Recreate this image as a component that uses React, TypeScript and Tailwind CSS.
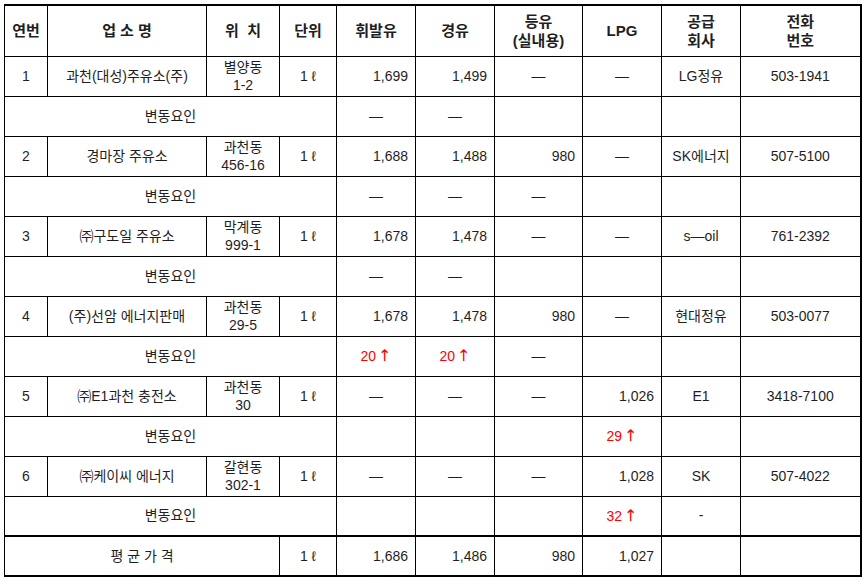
import React from 'react';

const stations = [
  {
    no: '1', name: '과천(대성)주유소(주)', loc: ['별양동', '1-2'],
    price: ['1,699', '1,499', '—', '—'], co: 'LG정유', tel: '503-1941',
    diff: ['—', '—', '', '', ''],
  },
  {
    no: '2', name: '경마장 주유소', loc: ['과천동', '456-16'],
    price: ['1,688', '1,488', '980', '—'], co: 'SK에너지', tel: '507-5100',
    diff: ['—', '—', '—', '', ''],
  },
  {
    no: '3', name: '㈜구도일 주유소', loc: ['막계동', '999-1'],
    price: ['1,678', '1,478', '—', '—'], co: 's—oil', tel: '761-2392',
    diff: ['—', '—', '', '', ''],
  },
  {
    no: '4', name: '(주)선암 에너지판매', loc: ['과천동', '29-5'],
    price: ['1,678', '1,478', '980', '—'], co: '현대정유', tel: '503-0077',
    diff: ['20↑', '20↑', '—', '', ''],
  },
  {
    no: '5', name: '㈜E1과천 충전소', loc: ['과천동', '30'],
    price: ['—', '—', '—', '1,026'], co: 'E1', tel: '3418-7100',
    diff: ['', '', '', '29↑', ''],
  },
  {
    no: '6', name: '㈜케이씨 에너지', loc: ['갈현동', '302-1'],
    price: ['—', '—', '—', '1,028'], co: 'SK', tel: '507-4022',
    diff: ['', '', '', '32↑', '-'],
  },
];

const td = 'border border-black p-0 align-middle';

function Price({ v }: { v: string }) {
  const isNum = /\d/.test(v);
  return (
    <td className={`${td} ${isNum ? 'text-right pr-[7px]' : 'text-center'}`}>{v}</td>
  );
}

function Diff({ v }: { v: string }) {
  if (v.includes('↑')) {
    return (
      <td className={`${td} text-center text-[#ff0000]`}>
        {v.replace('↑', '')}
        <span className="ml-[2px] text-[16px] font-['DejaVu_Sans',sans-serif]">↑</span>
      </td>
    );
  }
  return <td className={`${td} text-center`}>{v}</td>;
}

export default function App() {
  return (
    <div className="w-[868px] h-[581px] bg-white pl-[4px] pt-[4px] text-[14px] text-[#1f1f1f] font-['Liberation_Sans','Noto_Sans_CJK_KR',sans-serif]">
      <table className="border-collapse table-fixed w-[856px] border-t-2 border-r-2 border-black">
        <colgroup>
          <col className="w-[43px]" />
          <col className="w-[159px]" />
          <col className="w-[73px]" />
          <col className="w-[57px]" />
          <col className="w-[79px]" />
          <col className="w-[79px]" />
          <col className="w-[88px]" />
          <col className="w-[79px]" />
          <col className="w-[79px]" />
          <col className="w-[120px]" />
        </colgroup>
        <thead>
          <tr className="h-[51px] font-bold text-[15px] text-center leading-[19px]">
            <th className={td}>연번</th>
            <th className={td}>업 소 명</th>
            <th className={`${td} whitespace-pre`}>위  치</th>
            <th className={td}>단위</th>
            <th className={td}>휘발유</th>
            <th className={td}>경유</th>
            <th className={td}>등유<br />(실내용)</th>
            <th className={td}>LPG</th>
            <th className={td}>공급<br />회사</th>
            <th className={td}>전화<br />번호</th>
          </tr>
        </thead>
        <tbody>
          {stations.map((s) => (
            <React.Fragment key={s.no}>
              <tr className="h-[40px]">
                <td className={`${td} text-center`}>{s.no}</td>
                <td className={`${td} text-center`}>{s.name}</td>
                <td className={`${td} text-center leading-[18px]`}>
                  {s.loc[0]}
                  <br />
                  {s.loc[1]}
                </td>
                <td className={`${td} text-center`}>1 ℓ</td>
                {s.price.map((p, i) => (
                  <Price key={i} v={p} />
                ))}
                <td className={`${td} text-center`}>{s.co}</td>
                <td className={`${td} text-center`}>{s.tel}</td>
              </tr>
              <tr className="h-[40px]">
                <td colSpan={4} className={`${td} text-center`}>변동요인</td>
                {s.diff.map((d, i) => (
                  <Diff key={i} v={d} />
                ))}
                <td className={td}></td>
              </tr>
            </React.Fragment>
          ))}
          <tr className="h-[40px] border-t-2 border-b-2 border-black">
            <td colSpan={3} className={`${td} text-center whitespace-pre`}>평 균 가 격</td>
            <td className={`${td} text-center`}>1 ℓ</td>
            <Price v="1,686" />
            <Price v="1,486" />
            <Price v="980" />
            <Price v="1,027" />
            <td className={td}></td>
            <td className={td}></td>
          </tr>
        </tbody>
      </table>
    </div>
  );
}
